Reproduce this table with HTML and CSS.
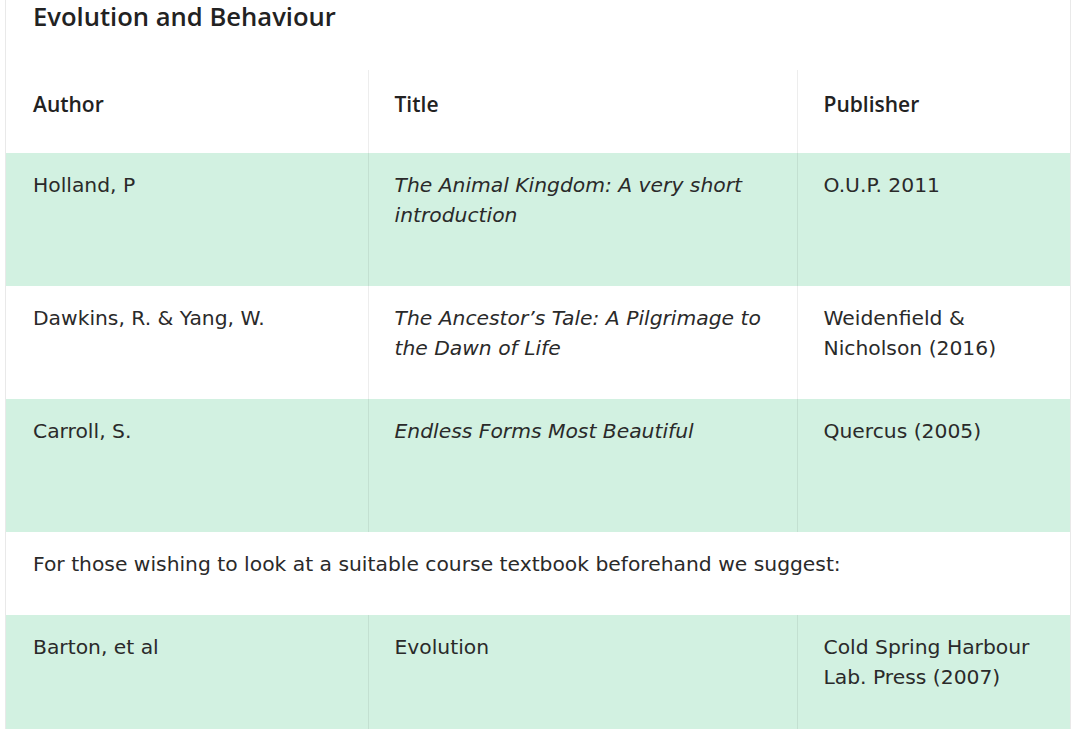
FILE: index.html
```html
<!DOCTYPE html>
<html lang="en">
<head>
<meta charset="utf-8">
<title>Evolution and Behaviour</title>
<link rel="stylesheet" href="styles.css">
</head>
<body>
<div class="panel">
  <h2 class="heading">Evolution and Behaviour</h2>
  <table class="books">
    <colgroup>
      <col class="c-author">
      <col class="c-title">
      <col class="c-pub">
    </colgroup>
    <thead>
      <tr class="head-row">
        <th>Author</th>
        <th>Title</th>
        <th>Publisher</th>
      </tr>
    </thead>
    <tbody>
      <tr class="green tall">
        <td>Holland, P</td>
        <td><em>The Animal Kingdom: A very short introduction</em></td>
        <td>O.U.P. 2011</td>
      </tr>
      <tr>
        <td>Dawkins, R. &amp; Yang, W.</td>
        <td><em>The Ancestor’s Tale: A Pilgrimage to the Dawn of Life</em></td>
        <td>Weidenfield &amp; Nicholson (2016)</td>
      </tr>
      <tr class="green tall">
        <td>Carroll, S.</td>
        <td><em>Endless Forms Most Beautiful</em></td>
        <td>Quercus (2005)</td>
      </tr>
      <tr class="note-row">
        <td colspan="3">For those wishing to look at a suitable course textbook beforehand we suggest:</td>
      </tr>
      <tr class="green tall">
        <td>Barton, et al</td>
        <td>Evolution</td>
        <td>Cold Spring Harbour Lab. Press (2007)</td>
      </tr>
    </tbody>
  </table>
</div>
</body>
</html>
```

FILE: styles.css
```css
html, body {
  margin: 0;
  padding: 0;
  background: #ffffff;
}

body {
  padding: 0 9px 0 5px;
  font-family: "DejaVu Sans", Verdana, sans-serif;
  color: #2a2a2a;
}

.panel {
  border-left: 1px solid #e9e9e9;
  border-right: 1px solid #e9e9e9;
  background: #ffffff;
  min-height: 729px;
}

.heading {
  margin: 0;
  padding: 0 28px 0 27px;
  font-family: "Open Sans", "Noto Sans", sans-serif;
  font-weight: 600;
  font-size: 25.6px;
  line-height: 34px;
  color: #222222;
  height: 70px;
}

.books {
  width: 100%;
  border-collapse: collapse;
  table-layout: fixed;
}

.c-author { width: 362px; }
.c-title { width: 429px; }
.c-pub { width: auto; }

.books th,
.books td {
  text-align: left;
  vertical-align: top;
  padding: 17px 20px 36px 26px;
  font-size: 20.3px;
  line-height: 30px;
  border-left: 1px solid rgba(0, 0, 0, 0.07);
}

.books th:first-child,
.books td:first-child {
  border-left: none;
  padding-left: 27px;
}

.books th {
  font-family: "Open Sans", "Noto Sans", sans-serif;
  font-weight: 600;
  font-size: 21px;
  color: #222222;
  padding-top: 19px;
  padding-bottom: 34px;
}

.books em {
  font-style: italic;
}

.green {
  background: #d2f1e1;
}

.tall {
  height: 133px;
}

.note-row td {
  border-left: none;
}
```
